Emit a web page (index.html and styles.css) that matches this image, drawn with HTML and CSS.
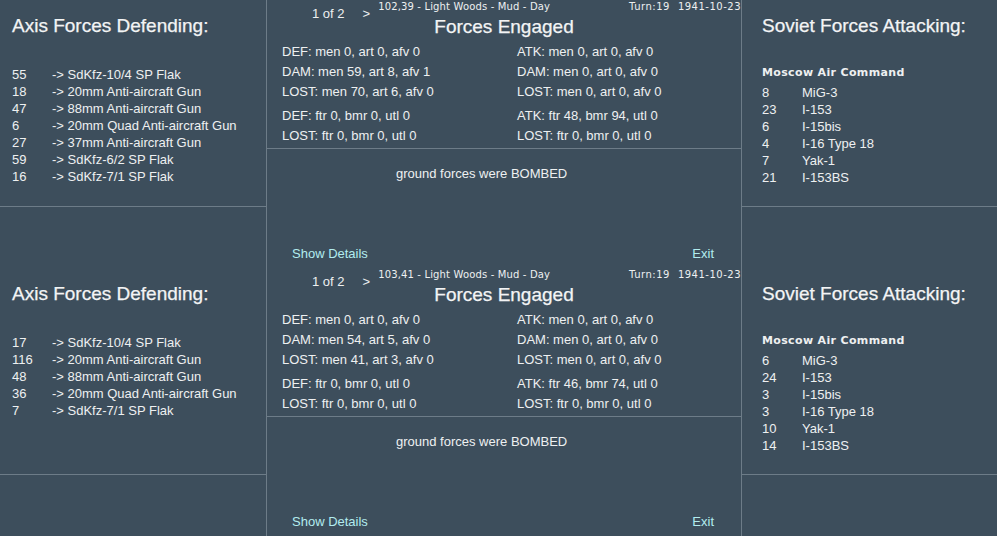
FILE: index.html
```html
<!DOCTYPE html>
<html lang="en">
<head>
  <meta charset="UTF-8" />
  <title>Combat Report</title>
  <link rel="stylesheet" href="styles.css">
</head>
<body>
  <div class="screen">

    <div class="battle">
      <div class="side">
        <div class="side-top">
          <h2 class="side-title">Axis Forces Defending:</h2>
          <ul class="unit-list">
            <li class="unit"><span class="qty">55</span><span class="name">-&gt; SdKfz-10/4 SP Flak</span></li>
            <li class="unit"><span class="qty">18</span><span class="name">-&gt; 20mm Anti-aircraft Gun</span></li>
            <li class="unit"><span class="qty">47</span><span class="name">-&gt; 88mm Anti-aircraft Gun</span></li>
            <li class="unit"><span class="qty">6</span><span class="name">-&gt; 20mm Quad Anti-aircraft Gun</span></li>
            <li class="unit"><span class="qty">27</span><span class="name">-&gt; 37mm Anti-aircraft Gun</span></li>
            <li class="unit"><span class="qty">59</span><span class="name">-&gt; SdKfz-6/2 SP Flak</span></li>
            <li class="unit"><span class="qty">16</span><span class="name">-&gt; SdKfz-7/1 SP Flak</span></li>
          </ul>
        </div>
      </div>

      <div class="engaged">
        <div class="engaged-top">
          <div class="nav">
            <span class="page">1 of 2</span>
            <span class="next">&gt;</span>
            <span class="hex">102,39 - Light Woods - Mud - Day</span>
            <span class="turn">Turn:19</span>
            <span class="date">1941-10-23</span>
          </div>
          <h1 class="engaged-title">Forces Engaged</h1>
          <div class="stats">
            <span>DEF: men 0, art 0, afv 0</span><span>ATK: men 0, art 0, afv 0</span>
            <span>DAM: men 59, art 8, afv 1</span><span>DAM: men 0, art 0, afv 0</span>
            <span>LOST: men 70, art 6, afv 0</span><span>LOST: men 0, art 0, afv 0</span>
          </div>
          <div class="stats air">
            <span>DEF: ftr 0, bmr 0, utl 0</span><span>ATK: ftr 48, bmr 94, utl 0</span>
            <span>LOST: ftr 0, bmr 0, utl 0</span><span>LOST: ftr 0, bmr 0, utl 0</span>
          </div>
        </div>
        <div class="engaged-bottom">
          <p class="report">ground forces were BOMBED</p>
          <div class="links">
            <span class="link">Show Details</span>
            <span class="link">Exit</span>
          </div>
        </div>
      </div>

      <div class="side soviet">
        <div class="side-top">
          <h2 class="side-title">Soviet Forces Attacking:</h2>
          <ul class="unit-list">
            <li class="command">Moscow Air Command</li>
            <li class="unit"><span class="qty">8</span><span class="name">MiG-3</span></li>
            <li class="unit"><span class="qty">23</span><span class="name">I-153</span></li>
            <li class="unit"><span class="qty">6</span><span class="name">I-15bis</span></li>
            <li class="unit"><span class="qty">4</span><span class="name">I-16 Type 18</span></li>
            <li class="unit"><span class="qty">7</span><span class="name">Yak-1</span></li>
            <li class="unit"><span class="qty">21</span><span class="name">I-153BS</span></li>
          </ul>
        </div>
      </div>
    </div>

    <div class="battle">
      <div class="side">
        <div class="side-top">
          <h2 class="side-title">Axis Forces Defending:</h2>
          <ul class="unit-list">
            <li class="unit"><span class="qty">17</span><span class="name">-&gt; SdKfz-10/4 SP Flak</span></li>
            <li class="unit"><span class="qty">116</span><span class="name">-&gt; 20mm Anti-aircraft Gun</span></li>
            <li class="unit"><span class="qty">48</span><span class="name">-&gt; 88mm Anti-aircraft Gun</span></li>
            <li class="unit"><span class="qty">36</span><span class="name">-&gt; 20mm Quad Anti-aircraft Gun</span></li>
            <li class="unit"><span class="qty">7</span><span class="name">-&gt; SdKfz-7/1 SP Flak</span></li>
          </ul>
        </div>
      </div>

      <div class="engaged">
        <div class="engaged-top">
          <div class="nav">
            <span class="page">1 of 2</span>
            <span class="next">&gt;</span>
            <span class="hex">103,41 - Light Woods - Mud - Day</span>
            <span class="turn">Turn:19</span>
            <span class="date">1941-10-23</span>
          </div>
          <h1 class="engaged-title">Forces Engaged</h1>
          <div class="stats">
            <span>DEF: men 0, art 0, afv 0</span><span>ATK: men 0, art 0, afv 0</span>
            <span>DAM: men 54, art 5, afv 0</span><span>DAM: men 0, art 0, afv 0</span>
            <span>LOST: men 41, art 3, afv 0</span><span>LOST: men 0, art 0, afv 0</span>
          </div>
          <div class="stats air">
            <span>DEF: ftr 0, bmr 0, utl 0</span><span>ATK: ftr 46, bmr 74, utl 0</span>
            <span>LOST: ftr 0, bmr 0, utl 0</span><span>LOST: ftr 0, bmr 0, utl 0</span>
          </div>
        </div>
        <div class="engaged-bottom">
          <p class="report">ground forces were BOMBED</p>
          <div class="links">
            <span class="link">Show Details</span>
            <span class="link">Exit</span>
          </div>
        </div>
      </div>

      <div class="side soviet">
        <div class="side-top">
          <h2 class="side-title">Soviet Forces Attacking:</h2>
          <ul class="unit-list">
            <li class="command">Moscow Air Command</li>
            <li class="unit"><span class="qty">6</span><span class="name">MiG-3</span></li>
            <li class="unit"><span class="qty">24</span><span class="name">I-153</span></li>
            <li class="unit"><span class="qty">3</span><span class="name">I-15bis</span></li>
            <li class="unit"><span class="qty">3</span><span class="name">I-16 Type 18</span></li>
            <li class="unit"><span class="qty">10</span><span class="name">Yak-1</span></li>
            <li class="unit"><span class="qty">14</span><span class="name">I-153BS</span></li>
          </ul>
        </div>
      </div>
    </div>

  </div>
</body>
</html>
```

FILE: styles.css
```css
body {
  margin: 0;
  background: #ffffff;
  font-family: 'Liberation Sans', Arial, sans-serif;
  font-size: 13px;
  color: #eef0f1;
}
.screen {
  width: 997px;
  height: 536px;
  background: #3d4e5c;
  overflow: hidden;
}
.battle {
  display: grid;
  grid-template-columns: 267px 475px 255px;
  height: 268px;
}
.side {
  border-right: 1px solid #6d7c88;
}
.side.soviet {
  border-right: none;
}
.side-top {
  height: 206px;
  border-bottom: 1px solid #6d7c88;
  padding-left: 12px;
  box-sizing: content-box;
}
.soviet .side-top {
  padding-left: 20px;
}
.side-title {
  margin: 0;
  padding-top: 15px;
  font-size: 19px;
  font-weight: normal;
  line-height: 22px;
  color: #f3f4f5;
  -webkit-text-stroke: 0.25px #f3f4f5;
}
.unit-list {
  list-style: none;
  margin: 29px 0 0;
  padding: 0;
}
.unit {
  display: flex;
  line-height: 17px;
}
.qty {
  width: 40px;
}
.command {
  font-family: 'DejaVu Sans', Verdana, sans-serif;
  font-size: 11px;
  font-weight: bold;
  letter-spacing: 0.35px;
  line-height: 14px;
  margin-bottom: 4px;
}

.engaged {
  display: flex;
  flex-direction: column;
  border-right: 1px solid #6d7c88;
}
.engaged-top {
  height: 148px;
  border-bottom: 1px solid #6d7c88;
  box-sizing: content-box;
}
.nav {
  display: flex;
  align-items: flex-start;
  height: 16px;
}
.page {
  margin-left: 45px;
  padding-top: 6px;
  line-height: 16px;
}
.next {
  margin-left: 18px;
  padding-top: 6px;
  line-height: 16px;
}
.hex,
.turn,
.date {
  font-family: 'DejaVu Sans', Verdana, sans-serif;
  font-size: 10px;
  letter-spacing: 0.15px;
  line-height: 12px;
  padding-top: 1px;
  white-space: nowrap;
}
.hex {
  margin-left: 8px;
}
.turn,
.date {
  letter-spacing: 0.5px;
}
.turn {
  margin-left: auto;
}
.date {
  margin-left: 8px;
  margin-right: 0;
}
.engaged-title {
  margin: 0;
  font-size: 19px;
  font-weight: normal;
  line-height: 22px;
  text-align: center;
  color: #f3f4f5;
  -webkit-text-stroke: 0.25px #f3f4f5;
}
.stats {
  display: grid;
  grid-template-columns: 235px auto;
  padding-left: 15px;
  margin-top: 4px;
  line-height: 20px;
  white-space: nowrap;
}
.stats.air {
  margin-top: 4px;
}
.engaged-bottom {
  flex: 1;
  display: flex;
  flex-direction: column;
}
.report {
  margin: 16px 0 0 129px;
  line-height: 17px;
}
.links {
  margin-top: auto;
  display: flex;
  justify-content: space-between;
  padding: 0 27px 6px 25px;
  line-height: 17px;
}
.link {
  color: #b2ecef;
  cursor: pointer;
}
```
